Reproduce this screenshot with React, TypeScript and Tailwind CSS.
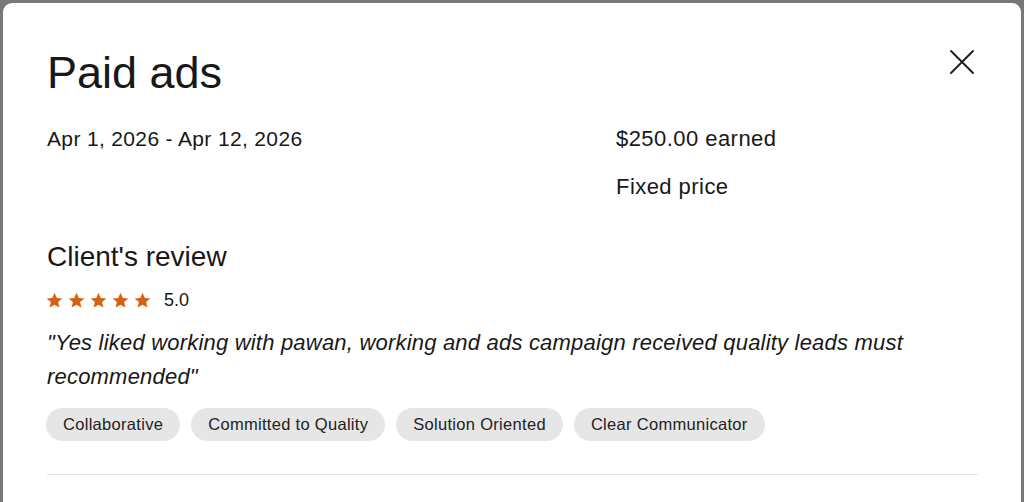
import React from "react";

const Star = () => (
  <svg width="17" height="17" viewBox="0 0 24 24" className="shrink-0">
    <path
      d="M12 1l3.2 7.3 7.9.7-6 5.2 1.8 7.8L12 18 5.1 22l1.8-7.8-6-5.2 7.9-.7z"
      fill="#d9600f"
    />
  </svg>
);

const chips = ["Collaborative", "Committed to Quality", "Solution Oriented", "Clear Communicator"];

export default function App() {
  return (
    <div
      className="w-[1024px] h-[502px] bg-[#787878] overflow-hidden pt-[3px] pl-[3px]"
      style={{ fontFamily: '"Liberation Sans", Arial, sans-serif' }}
    >
      <div className="w-[1018px] h-[499px] bg-white rounded-t-[9px] pl-[44px] pr-[43px] pt-[43px] text-[#181818]">
        <div className="flex items-start justify-between">
          <h1 className="text-[45px] leading-[54px] font-normal">Paid ads</h1>
          <button className="mt-[4px] mr-[4px] w-[24px] h-[24px] flex items-center justify-center">
            <svg width="24" height="24" viewBox="0 0 24 24">
              <path d="M1 1L23 23M23 1L1 23" stroke="#1a1a1a" strokeWidth="1.8" strokeLinecap="round" />
            </svg>
          </button>
        </div>

        <div className="grid grid-cols-[569px_1fr] mt-[25px] leading-[28px]">
          <div className="text-[21px] tracking-[0.35px]">Apr 1, 2026 - Apr 12, 2026</div>
          <div className="flex flex-col gap-[20px] text-[22px] tracking-[0.45px]">
            <div>$250.00 earned</div>
            <div>Fixed price</div>
          </div>
        </div>

        <h2 className="mt-[40px] text-[28px] leading-[32px] font-normal">Client's review</h2>

        <div className="mt-[15px] h-[24px] flex items-center">
          <div className="flex gap-[5px] -ml-[1px]">
            <Star />
            <Star />
            <Star />
            <Star />
            <Star />
          </div>
          <span className="ml-[13px] text-[18px]">5.0</span>
        </div>

        <p className="mt-[14px] text-[22px] leading-[34px] italic tracking-[0.2px] pr-[20px]">
          "Yes liked working with pawan, working and ads campaign received quality leads must recommended"
        </p>

        <div className="mt-[14px] flex gap-[11px] -ml-[1px]">
          {chips.map((c) => (
            <span
              key={c}
              className="h-[33px] px-[17px] rounded-full bg-[#e6e6e6] text-[16.5px] tracking-[0.3px] flex items-center text-[#222]"
            >
              {c}
            </span>
          ))}
        </div>

        <div className="mt-[33px] h-px bg-[#e2e2e2]" />
      </div>
    </div>
  );
}
